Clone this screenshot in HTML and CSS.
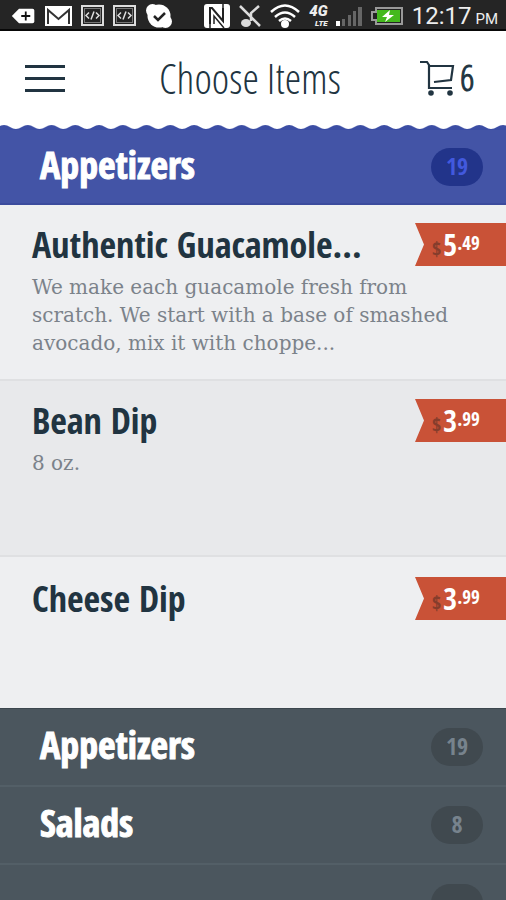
FILE: index.html
```
<!DOCTYPE html>
<html lang="en">
<head>
    <meta charset="UTF-8">
    <meta name="viewport" content="width=device-width, initial-scale=1">
    <title>Choose Items</title>

    <link rel="stylesheet" href="styles.css">

</head>
<body>
    <div class="screen">
        <div class="statusbar">
            <div class="status-left">
                <svg width="25" height="18" viewBox="0 0 26 20"><path d="M0 10l8-8h15a2 2 0 0 1 2 2v12a2 2 0 0 1-2 2H8z" fill="#fff"/><path d="M15.500 5v10M10.500 10h10" stroke="#111" stroke-width="2"/></svg>
                <svg width="27" height="20" viewBox="0 0 27 20"><rect width="27" height="20" fill="#fff"/><path d="M3 18V4l10.500 9L24 4v14" fill="none" stroke="#333" stroke-width="2"/></svg>
                <svg width="23" height="21" viewBox="0 0 23 21"><rect x="1" y="1" width="21" height="19" fill="#222" stroke="#ddd" stroke-width="2"/><rect x="3.500" y="3.500" width="16" height="14" fill="none" stroke="#777"/><path d="M8 7.500l-3 3 3 3M15 7.500l3 3-3 3M13 6.500l-3 8" fill="none" stroke="#ddd" stroke-width="1.500"/></svg>
                <svg width="23" height="21" viewBox="0 0 23 21"><rect x="1" y="1" width="21" height="19" fill="#222" stroke="#ddd" stroke-width="2"/><rect x="3.500" y="3.500" width="16" height="14" fill="none" stroke="#777"/><path d="M8 7.500l-3 3 3 3M15 7.500l3 3-3 3M13 6.500l-3 8" fill="none" stroke="#ddd" stroke-width="1.500"/></svg>
                <svg width="28" height="26" viewBox="0 0 28 26"><circle cx="14" cy="13" r="11.500" fill="#fff"/><circle cx="7.500" cy="7.500" r="6.500" fill="#fff"/><circle cx="20.500" cy="18.500" r="6.500" fill="#fff"/><path d="M9 13l4 4 7-7" fill="none" stroke="#222" stroke-width="2.500"/></svg>
            </div>
            <div class="status-right">
                <svg width="28" height="26" viewBox="0 0 28 26"><path d="M4 1h20q3 0 3 3v18q0 3-3 3H4q-3 0-3-3V4q0-3 3-3z" fill="#fff"/><path d="M7 21V5h2l11 13V5" fill="none" stroke="#222" stroke-width="2"/><path d="M7 25V21M11 21v-8l10 12M20 5V1" fill="none" stroke="#222" stroke-width="1.500"/></svg>
                <svg width="22" height="24" viewBox="0 0 22 24"><path d="M1 2l20 20M12 17V9l8-7" fill="none" stroke="#ddd" stroke-width="2.500"/><ellipse cx="7" cy="19" rx="5" ry="4" fill="#ddd"/></svg>
                <svg width="32" height="25" viewBox="0 0 32 25"><path d="M2 9q14-13 28 0M6 14q10-9 20 0M10 18q6-5 12 0" fill="none" stroke="#fff" stroke-width="2.500"/><circle cx="16" cy="21" r="4" fill="#fff"/></svg>
                <span class="network"><span>4G</span><small>LTE</small></span>
                <svg width="27" height="20" viewBox="0 0 27 20"><path d="M0 15h4v5H0z" fill="#fff"/><path d="M6 13h3v7H6zM12 9h3v11h-3zM17 5h3v15h-3zM22 1h4v19h-4z" fill="#666"/></svg>
                <svg width="33" height="18" viewBox="0 0 33 18"><path d="M5 1h26v16H5v-4H1V5h4z" fill="#222" stroke="#999" stroke-width="2"/><path d="M6 3h23v12H6z" fill="#44b91d"/><path d="M19 3l-8 7h5l-2 5 9-7h-5z" fill="#fff"/></svg>
                <span class="clock">12:17<small>PM</small></span>
            </div>
        </div>

        <header class="header">
            <button class="menu-btn" type="button" aria-label="Menu"><span></span><span></span><span></span></button>
            <h1>Choose Items</h1>
            <button class="cart-btn" type="button" aria-label="Cart">
                <svg width="36" height="36" viewBox="0 0 36 36" fill="none" stroke="#213441" stroke-width="2.200"><path d="M1 2h7l2 3v23h23"/><path d="M10 6h24l-2 14-17 2"/><circle cx="12" cy="33" r="2.800" fill="#213441" stroke="none"/><circle cx="31" cy="33" r="2.800" fill="#213441" stroke="none"/></svg>
                <span>6</span>
            </button>
        </header>

        <svg class="scallop" viewBox="0 0 506 5" preserveAspectRatio="none" aria-hidden="true">
            <defs>
                <pattern id="scallops" x="-8" width="23.760" height="5" patternUnits="userSpaceOnUse">
                    <path d="M0 5V4Q3 4 6 2Q12 -2 18 2Q21 4 23.760 4V5z" fill="#3b4da4"/>
                </pattern>
            </defs>
            <rect width="506" height="5" fill="url(#scallops)"/>
        </svg>

        <button class="category active" type="button">
            <span class="category-name">Appetizers</span>
            <span class="count">19</span>
        </button>

        <main class="items">
            <article class="item">
                <div class="item-text">
                    <h2>Authentic Guacamole...</h2>
                    <p>We make each guacamole fresh from scratch. We start with a base of smashed avocado, mix it with choppe...</p>
                </div>
                <div class="price"><span class="dollar">$</span><b>5</b><sup>.49</sup></div>
            </article>
            <article class="item alt">
                <div class="item-text">
                    <h2>Bean Dip</h2>
                    <p>8 oz.</p>
                </div>
                <div class="price"><span class="dollar">$</span><b>3</b><sup>.99</sup></div>
            </article>
            <article class="item last">
                <div class="item-text">
                    <h2>Cheese Dip</h2>
                </div>
                <div class="price"><span class="dollar">$</span><b>3</b><sup>.99</sup></div>
            </article>
        </main>

        <nav class="categories">
            <button class="category" type="button">
                <span class="category-name">Appetizers</span>
                <span class="count">19</span>
            </button>
            <button class="category" type="button">
                <span class="category-name">Salads</span>
                <span class="count">8</span>
            </button>
            <div class="category">
                <span class="category-name"></span>
                <span class="count"></span>
            </div>
        </nav>
    </div>
</body>
</html>
```
FILE: styles.css
```
* {
    box-sizing: border-box;
}
body {
    margin: 0;
    font-family: "Open Sans Condensed", "Open Sans", sans-serif;
    color: #213441;
    background: #fff;
}
h1, h2, p {
    margin: 0;
}
button {
    border: none;
    background: none;
    padding: 0;
    color: inherit;
    font-family: inherit;
    cursor: pointer;
}
.screen {
    display: flex;
    flex-direction: column;
    height: 100vh;
    overflow: hidden;
}
.screen > * {
    flex-shrink: 0;
}

/* status bar */
.statusbar {
    display: flex;
    justify-content: space-between;
    align-items: center;
    height: 31px;
    padding: 2px 8px 0 11px;
    background: #252525;
    border-bottom: 2px solid #080808;
    color: #eee;
    font-family: Roboto, sans-serif;
}
.status-left, .status-right {
    display: flex;
    align-items: center;
}
.status-left {
    gap: 9px;
}
.status-right {
    gap: 8px;
}
.network {
    display: flex;
    flex-direction: column;
    align-items: flex-end;
    font-size: 15px;
    line-height: 16px;
    font-weight: 900;
    font-style: italic;
}
.network small {
    font-size: 8px;
    line-height: 10px;
}
.clock {
    font-size: 24px;
}
.clock small {
    font-size: 15px;
    margin-left: 4px;
}

/* header */
.header {
    display: grid;
    grid-template-columns: 56px 1fr 56px;
    align-items: center;
    height: 94px;
    padding: 0 31px 0 25px;
}
.header h1 {
    font-family: "Open Sans Condensed Light", "Open Sans Condensed", "Open Sans", sans-serif;
    font-size: 42px;
    line-height: 44px;
    font-weight: 300;
    text-align: center;
}
.menu-btn {
    display: flex;
    flex-direction: column;
    gap: 9px;
    width: 40px;
}
.menu-btn span {
    height: 3px;
    background: #213441;
}
.cart-btn {
    display: flex;
    align-items: center;
    gap: 5px;
    font-family: "Open Sans Condensed Light", "Open Sans Condensed", "Open Sans", sans-serif;
    font-size: 36px;
    line-height: 36px;
    font-weight: 300;
    -webkit-text-stroke: 1px #213441;
}
.scallop {
    display: block;
    width: 100%;
    height: 5px;
}

/* categories */
.category {
    display: flex;
    align-items: center;
    justify-content: space-between;
    width: 100%;
    height: 78px;
    padding: 0 23px 0 40px;
    background: #4b565e;
    border-bottom: 2px solid #535f67;
    color: #fff;
}
.category-name {
    padding-bottom: 6px;
    font-size: 38px;
    line-height: 44px;
    font-weight: 800;
    -webkit-text-stroke: 1px #fff;
}
.count {
    width: 52px;
    height: 38px;
    border-radius: 19px;
    background: #40494f;
    color: #77838d;
    font-size: 24px;
    line-height: 36px;
    font-weight: 700;
    text-align: center;
}
.category.active {
    height: 75px;
    background: #4354a6;
    border-bottom: 2px solid #3b4b9d;
}
.active .count {
    background: #22348a;
    color: #4259de;
}

/* menu items */
.item {
    display: flex;
    justify-content: space-between;
    align-items: flex-start;
    min-height: 176px;
    padding: 18px 0 18px 32px;
    background: #eeeff1;
    border-bottom: 2px solid #dfe0e2;
}
.item.alt {
    background: #e8e9eb;
}
.item.last {
    min-height: 151px;
    padding-top: 20px;
    border-bottom: none;
}
.item-text {
    flex: 1;
    min-width: 0;
}
.item h2 {
    font-size: 36px;
    line-height: 44px;
    font-weight: 500;
    white-space: nowrap;
}
.item p {
    margin-right: -40px;
    padding-top: 6px;
    color: #7b828a;
    font-family: "DejaVu Serif", serif;
    font-size: 20px;
    line-height: 28px;
}
.price {
    width: 91px;
    height: 43px;
    padding-left: 17px;
    background: #c95237;
    clip-path: polygon(0 0, 100% 0, 100% 100%, 0 100%, 9px 50%);
    color: #fff;
    line-height: 43px;
    white-space: nowrap;
}
.price .dollar {
    color: #853d2c;
    font-size: 20px;
    font-weight: 700;
}
.price b {
    margin-left: 2px;
    font-size: 30px;
}
.price sup {
    font-size: 19px;
    font-weight: 700;
    line-height: 0;
}

/* dark list at the bottom */
.categories {
    background: #4b565e;
    border-top: 1px solid #3c474e;
}
```
